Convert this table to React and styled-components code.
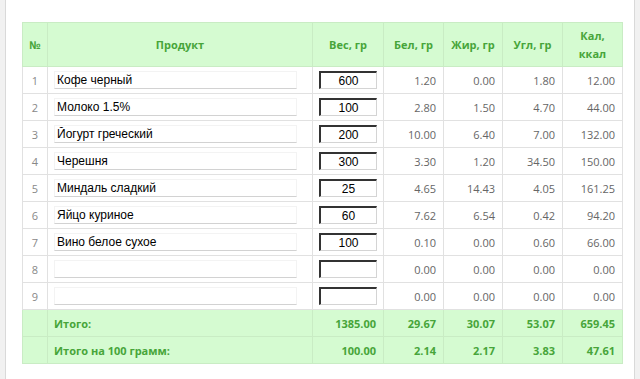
import React from "react";
import styled, { createGlobalStyle } from "styled-components";

const GlobalStyle = createGlobalStyle`
  html, body {
    margin: 0;
    padding: 0;
    background: #f1f1f1;
  }
`;

const rows = [
  { name: "Кофе черный", weight: "600", p: "1.20", f: "0.00", c: "1.80", kcal: "12.00" },
  { name: "Молоко 1.5%", weight: "100", p: "2.80", f: "1.50", c: "4.70", kcal: "44.00" },
  { name: "Йогурт греческий", weight: "200", p: "10.00", f: "6.40", c: "7.00", kcal: "132.00" },
  { name: "Черешня", weight: "300", p: "3.30", f: "1.20", c: "34.50", kcal: "150.00" },
  { name: "Миндаль сладкий", weight: "25", p: "4.65", f: "14.43", c: "4.05", kcal: "161.25" },
  { name: "Яйцо куриное", weight: "60", p: "7.62", f: "6.54", c: "0.42", kcal: "94.20" },
  { name: "Вино белое сухое", weight: "100", p: "0.10", f: "0.00", c: "0.60", kcal: "66.00" },
  { name: "", weight: "", p: "0.00", f: "0.00", c: "0.00", kcal: "0.00" },
  { name: "", weight: "", p: "0.00", f: "0.00", c: "0.00", kcal: "0.00" },
];

const totals = [
  { label: "Итого:", w: "1385.00", p: "29.67", f: "30.07", c: "53.07", kcal: "659.45" },
  { label: "Итого на 100 грамм:", w: "100.00", p: "2.14", f: "2.17", c: "3.83", kcal: "47.61" },
];

const App = () => {
  return (
    <>
      <GlobalStyle />
      <StPage>
        <StTable>
          <colgroup>
            <col style={{ width: 25 }} />
            <col style={{ width: 265 }} />
            <col style={{ width: 71 }} />
            <col style={{ width: 60 }} />
            <col style={{ width: 59 }} />
            <col style={{ width: 60 }} />
            <col style={{ width: 60 }} />
          </colgroup>
          <thead>
            <tr>
              <StHead>№</StHead>
              <StHead>Продукт</StHead>
              <StHead>Вес, гр</StHead>
              <StHead>Бел, гр</StHead>
              <StHead>Жир, гр</StHead>
              <StHead>Угл, гр</StHead>
              <StHead>
                Кал,
                <br />
                ккал
              </StHead>
            </tr>
          </thead>
          <tbody>
            {rows.map((row, i) => (
              <StRow key={i}>
                <StNum>{i + 1}</StNum>
                <StCell>
                  <StNameInput defaultValue={row.name} />
                </StCell>
                <StCell $center>
                  <StWeightInput defaultValue={row.weight} />
                </StCell>
                <StValue>{row.p}</StValue>
                <StValue>{row.f}</StValue>
                <StValue>{row.c}</StValue>
                <StValue>{row.kcal}</StValue>
              </StRow>
            ))}
            {totals.map((t) => (
              <StRow key={t.label}>
                <StTotal />
                <StTotal>{t.label}</StTotal>
                <StTotal $right>{t.w}</StTotal>
                <StTotal $right>{t.p}</StTotal>
                <StTotal $right>{t.f}</StTotal>
                <StTotal $right>{t.c}</StTotal>
                <StTotal $right>{t.kcal}</StTotal>
              </StRow>
            ))}
          </tbody>
        </StTable>
      </StPage>
    </>
  );
};

export default App;

const StPage = styled.div`
  box-sizing: border-box;
  margin-left: 5px;
  width: 630px;
  height: 100vh;
  padding: 22px 0 0 16px;
  background: #ffffff;
  border-left: 1px solid #d9d9d9;
  border-right: 1px solid #d9d9d9;
`;

const StTable = styled.table`
  width: 600px;
  table-layout: fixed;
  border-collapse: collapse;
  font-family: "Open Sans", "DejaVu Sans", sans-serif;
  font-size: 11px;
  color: #555555;
`;

const StHead = styled.th`
  height: 43px;
  padding: 0 4px;
  background: #d5fbd1;
  border: 1px solid #c9ecc4;
  color: #47a53a;
  font-weight: 700;
  line-height: 18px;
  text-align: center;
  vertical-align: middle;
`;

const StRow = styled.tr`
  height: 27px;
`;

const StCell = styled.td`
  padding: 0 6px;
  border: 1px solid #e1e1e1;
  text-align: ${(props) => (props.$center ? "center" : "left")};
  vertical-align: middle;
`;

const StNum = styled(StCell)`
  text-align: center;
  color: #888888;
`;

const StValue = styled(StCell)`
  padding-right: 7px;
  text-align: right;
  color: #666666;
`;

const StTotal = styled.td`
  padding: 0 6px 0 6px;
  padding-right: ${(props) => (props.$right ? "7px" : "6px")};
  background: #d5fbd1;
  border: 1px solid #c9ecc4;
  color: #47a53a;
  font-weight: 700;
  text-align: ${(props) => (props.$right ? "right" : "left")};
  vertical-align: middle;
`;

const StNameInput = styled.input`
  box-sizing: border-box;
  display: block;
  width: 243px;
  height: 18px;
  padding: 0 2px;
  border: 1px solid #f3f3f3;
  border-bottom-color: #d2d2d2;
  font-family: "Liberation Sans", Arial, sans-serif;
  font-size: 12px;
  color: #000000;
  background: #ffffff;
  outline: none;
`;

const StWeightInput = styled.input`
  box-sizing: border-box;
  display: block;
  margin: 0 auto;
  width: 58px;
  height: 18px;
  padding: 0;
  border: 1px solid #d4d4d4;
  border-top: 2px solid #333333;
  border-left: 2px solid #333333;
  font-family: "Liberation Sans", Arial, sans-serif;
  font-size: 12px;
  color: #000000;
  text-align: center;
  background: #ffffff;
  outline: none;
`;
